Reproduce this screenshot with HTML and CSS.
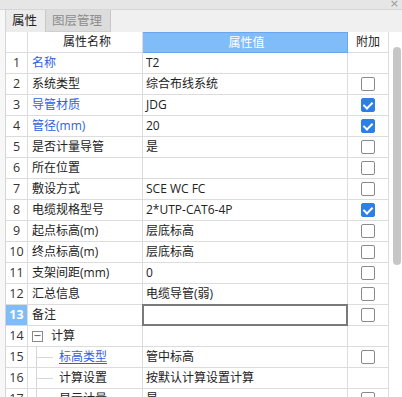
FILE: index.html
```html
<!DOCTYPE html>
<html lang="zh-CN">
<head>
    <meta charset="UTF-8">
    <title>属性</title>
    <link rel="stylesheet" href="styles.css">
</head>
<body>
<div class="top_strip">
    <span class="close">×</span>
</div>
<div class="tabs">
    <div class="tab active">属性</div>
    <div class="tab">图层管理</div>
</div>
<div class="panel">
    <div class="grid">
        <div class="cell num head"></div>
        <div class="cell name head center">属性名称</div>
        <div class="cell value head hl">属性值</div>
        <div class="cell add head">附加</div>

        <div class="cell num">1</div>
        <div class="cell name blue">名称</div>
        <div class="cell value">T2</div>
        <div class="cell add"></div>

        <div class="cell num">2</div>
        <div class="cell name">系统类型</div>
        <div class="cell value">综合布线系统</div>
        <div class="cell add"><span class="box"></span></div>

        <div class="cell num">3</div>
        <div class="cell name blue">导管材质</div>
        <div class="cell value">JDG</div>
        <div class="cell add"><span class="box checked"></span></div>

        <div class="cell num">4</div>
        <div class="cell name blue">管径(mm)</div>
        <div class="cell value">20</div>
        <div class="cell add"><span class="box checked"></span></div>

        <div class="cell num">5</div>
        <div class="cell name">是否计量导管</div>
        <div class="cell value">是</div>
        <div class="cell add"><span class="box"></span></div>

        <div class="cell num">6</div>
        <div class="cell name">所在位置</div>
        <div class="cell value"></div>
        <div class="cell add"><span class="box"></span></div>

        <div class="cell num">7</div>
        <div class="cell name">敷设方式</div>
        <div class="cell value">SCE WC FC</div>
        <div class="cell add"><span class="box"></span></div>

        <div class="cell num">8</div>
        <div class="cell name">电缆规格型号</div>
        <div class="cell value">2*UTP-CAT6-4P</div>
        <div class="cell add"><span class="box checked"></span></div>

        <div class="cell num">9</div>
        <div class="cell name">起点标高(m)</div>
        <div class="cell value">层底标高</div>
        <div class="cell add"><span class="box"></span></div>

        <div class="cell num">10</div>
        <div class="cell name">终点标高(m)</div>
        <div class="cell value">层底标高</div>
        <div class="cell add"><span class="box"></span></div>

        <div class="cell num">11</div>
        <div class="cell name">支架间距(mm)</div>
        <div class="cell value">0</div>
        <div class="cell add"><span class="box"></span></div>

        <div class="cell num">12</div>
        <div class="cell name">汇总信息</div>
        <div class="cell value">电缆导管(弱)</div>
        <div class="cell add"><span class="box"></span></div>

        <div class="cell num selected">13</div>
        <div class="cell name">备注</div>
        <div class="cell value editing"></div>
        <div class="cell add"><span class="box"></span></div>

        <div class="cell num">14</div>
        <div class="cell name"><span class="fold">−</span>计算</div>
        <div class="cell value"></div>
        <div class="cell add"></div>

        <div class="cell num">15</div>
        <div class="cell name child"><span class="link">标高类型</span></div>
        <div class="cell value">管中标高</div>
        <div class="cell add"><span class="box"></span></div>

        <div class="cell num">16</div>
        <div class="cell name child">计算设置</div>
        <div class="cell value">按默认计算设置计算</div>
        <div class="cell add"></div>

        <div class="cell num">17</div>
        <div class="cell name child">显示计量</div>
        <div class="cell value">是</div>
        <div class="cell add"><span class="box"></span></div>
    </div>
    <div class="scrollbar">
        <div class="thumb"></div>
    </div>
</div>
</body>
</html>
```

FILE: styles.css
```css
* {
    margin: 0;
    padding: 0;
    box-sizing: border-box;
}

body {
    width: 402px;
    height: 397px;
    overflow: hidden;
    background: #f7f7f7;
    font-family: "Open Sans", "Noto Sans CJK SC", sans-serif;
    font-size: 12px;
    color: #222;
}

.top_strip {
    height: 10px;
    background: #e6e6e6;
    border-bottom: 1px solid #d6d6d6;
    display: flex;
    justify-content: flex-end;
}

.close {
    font: 11px/8px "DejaVu Sans", sans-serif;
    color: #999;
    margin-right: 3px;
}

.tabs {
    height: 22px;
    margin-left: 5px;
    border-left: 1px solid #d4d4d4;
    background: #f0f0f0;
    display: flex;
}

.tab {
    line-height: 21px;
    padding: 0 6px;
    background: #dcdcdc;
    color: #8c8c8c;
    border-right: 1px solid #c8c8c8;
    border-bottom: 1px solid #d0d0d0;
    font-size: 12.5px;
}

.tab.active {
    background: #ececec;
    color: #222;
    width: 40px;
    border-bottom: none;
}

.tab:last-child {
    width: 65px;
}

.panel {
    display: flex;
    margin-left: 5px;
    border-left: 1px solid #d4d4d4;
    background: #fff;
}

.grid {
    display: grid;
    grid-template-columns: 22px 115px 205px 41px;
    grid-auto-rows: 21px;
}

.cell {
    border-right: 1px solid #dcdcdc;
    border-bottom: 1px solid #dcdcdc;
    line-height: 20px;
    white-space: nowrap;
    overflow: hidden;
    display: flex;
    align-items: center;
}

.num {
    justify-content: center;
    font-size: 12.5px;
    color: #333;
}

.name {
    padding-left: 4px;
}

.value {
    padding-left: 3px;
}

.add {
    justify-content: center;
}

.head.center,
.head.add {
    justify-content: center;
}

.head.hl {
    justify-content: center;
    background: #80bcf8;
    color: #fff;
    border: 1px solid #6aa6ee;
    border-left: none;
}

.blue {
    color: #2f5fe0;
}

.link {
    color: #2f5fe0;
    text-decoration: underline;
    text-underline-offset: 2px;
}

.selected {
    background: #80bcf8;
    color: #fff;
    font-weight: bold;
}

.editing {
    border: 2px solid #7a7a7a;
    margin-left: -1px;
    margin-top: -1px;
    height: 22px;
}

.box {
    width: 14px;
    height: 14px;
    border: 1px solid #8a8a8a;
    border-radius: 2px;
    background: #fff;
}

.box.checked {
    border-color: #2c7fe6;
    background: #2c7fe6;
    position: relative;
}

.box.checked::after {
    content: "";
    position: absolute;
    left: 3px;
    top: 1px;
    width: 4px;
    height: 7px;
    border: solid #fff;
    border-width: 0 2px 2px 0;
    transform: rotate(45deg);
}

.fold {
    width: 11px;
    height: 11px;
    border: 1px solid #8a8a8a;
    display: inline-flex;
    justify-content: center;
    align-items: center;
    font: 10px/1 "DejaVu Sans", sans-serif;
    color: #555;
    margin-right: 8px;
}

.child {
    padding-left: 31px;
    position: relative;
}

.child::before {
    content: "";
    position: absolute;
    left: 8px;
    top: -1px;
    bottom: -1px;
    border-left: 1px solid #d6d6d6;
}

.child::after {
    content: "";
    position: absolute;
    left: 9px;
    top: 10px;
    width: 16px;
    border-top: 1px solid #d6d6d6;
}

.scrollbar {
    width: 13px;
    background: #fff;
    padding-top: 15px;
    display: flex;
    justify-content: flex-end;
    align-items: flex-start;
    padding-right: 1px;
}

.thumb {
    width: 8px;
    height: 218px;
    border-radius: 4px;
    background: #c6c6c6;
}
```
